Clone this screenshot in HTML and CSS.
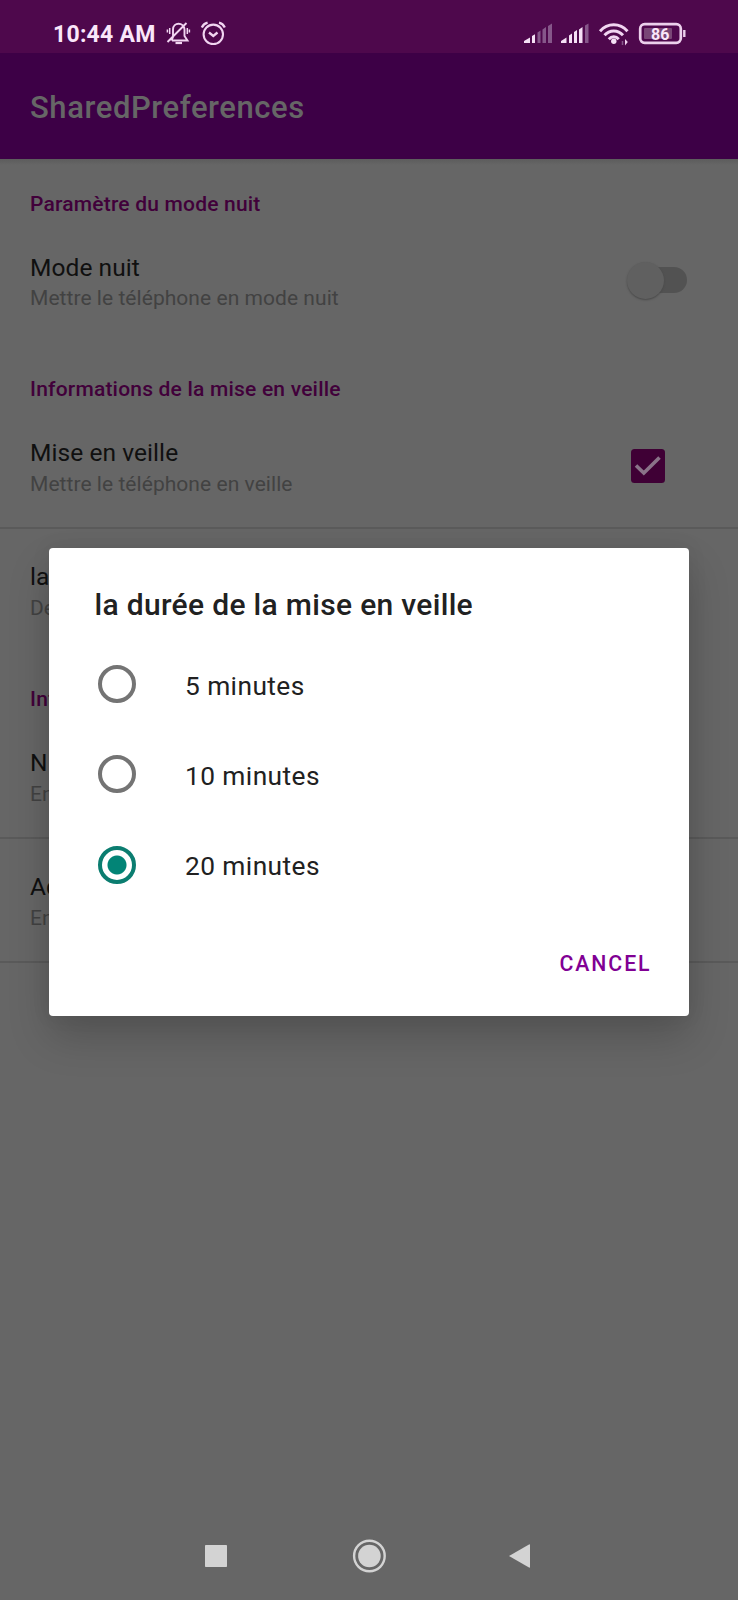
FILE: index.html
```html
<!DOCTYPE html>
<html lang="fr">
<head>
<meta charset="utf-8">
<title>SharedPreferences</title>
<link rel="stylesheet" href="styles.css">
</head>
<body>
<div class="screen">
  <header class="status">
    <span class="clock">10:44 AM</span>
    <svg class="status-left" width="62" height="26" viewBox="165 20 62 26" fill="none" stroke="#f1d5f1" stroke-width="1.9">
      <path d="M171.500 40.500 173 37V29.500C173 21.800 184 21.800 184.500 29.500V36L187.500 40.500H172M167.500 42 186.500 23"/>
      <path d="M175.500 43H182" stroke-width="2.200"/>
      <path d="M169.700 28V34M187.300 28V34M189.400 29.500V32.500M167.400 29.500V32.500" stroke-width="1.500"/>
      <circle cx="213.300" cy="34.300" r="9.700" stroke-width="2.100"/>
      <path d="M209 32.500 213.300 36 217.500 32.500M201.800 27.500C203 25 205 23.300 207.600 22.700M224.800 27.500C223.600 25 221.600 23.300 219 22.700" stroke-width="2.300"/>
    </svg>
    <svg class="status-right" width="166" height="28" viewBox="522 20 166 28">
      <g fill="#f5e0f5">
        <path d="M524 43V41L530 37.500V43ZM532 43V36L535 34.200V43Z"/>
        <path d="M561 43V41L566.500 37.500V43ZM569 43V35.500L572 33.500V43ZM574 43V32L577 30V43ZM579 43V29.500L582.500 27V43Z"/>
      </g>
      <g fill="#86578a">
        <path d="M537.500 43V32.500L540.500 30.500V43ZM542.500 43V29.500L546 27V43ZM548 43V26L552 23.500V43Z"/>
        <path d="M585 43V25.500L588.500 23.500V43Z"/>
      </g>
      <g fill="none" stroke="#f1d5f1" stroke-width="2.900">
        <path d="M600 31.200C607.500 22.600 620 22.600 627.500 31.200M604.500 35.300C609.500 29.600 618 29.600 623 35.300M608.800 39.200C611.600 36 616 36 618.700 39.200"/>
      </g>
      <circle cx="613.800" cy="41.300" r="2.700" fill="#f5e0f5"/>
      <path d="M625 39 627.800 42 625 45.500Z" fill="#f1d5f1"/>
      <path d="M622.500 41V45" stroke="#86578a" stroke-width="1.500"/>
      <rect x="640.200" y="24.200" width="40.600" height="18.600" rx="4.500" fill="none" stroke="#ecd0ec" stroke-width="2.700"/>
      <rect x="644" y="28" width="28" height="11" rx="1" fill="#794676"/>
      <path d="M684.300 30V37" stroke="#ecd0ec" stroke-width="2.400"/>
      <text class="charge" x="660.200" y="40">86</text>
    </svg>
  </header>
  <div class="appbar">SharedPreferences</div>

  <main class="prefs">
    <h2 class="category">Paramètre du mode nuit</h2>
    <section class="pref">
      <div class="pref-text"><p class="name">Mode nuit</p><p class="summary">Mettre le téléphone en mode nuit</p></div>
      <div class="toggle"><span class="track"></span><span class="thumb"></span></div>
    </section>
    <h2 class="category">Informations de la mise en veille</h2>
    <section class="pref ruled">
      <div class="pref-text"><p class="name">Mise en veille</p><p class="summary">Mettre le téléphone en veille</p></div>
      <svg class="check" width="34" height="34" viewBox="0 0 34 34"><rect width="34" height="34" rx="3.500" fill="#3f0035"/><path d="M5 16.500 12.800 24 28.500 8.500" fill="none" stroke="#8a7389" stroke-width="3.600"/></svg>
    </section>
    <section class="pref">
      <div class="pref-text"><p class="name">la durée</p><p class="summary">De</p></div>
    </section>
    <h2 class="category">Informations</h2>
    <section class="pref ruled">
      <div class="pref-text"><p class="name">N</p><p class="summary">Entrer</p></div>
    </section>
    <section class="pref ruled">
      <div class="pref-text"><p class="name">Adresse</p><p class="summary">Entrer</p></div>
    </section>
  </main>

  <nav class="navbar">
    <svg width="340" height="40" viewBox="200 1536 340 40" fill="#d3d3d3">
      <rect x="205" y="1545" width="22" height="22" rx=".7"/>
      <circle cx="369.400" cy="1556" r="11.300"/>
      <circle cx="369.400" cy="1556" r="15.300" fill="none" stroke="#d3d3d3" stroke-width="2.400"/>
      <path d="M509 1556 529 1544.500Q530 1544 530 1545V1567Q530 1568 529 1567.500Z"/>
    </svg>
  </nav>

  <div class="dialog" role="dialog">
    <h1 class="dialog-title">la durée de la mise en veille</h1>
    <div class="option"><span class="radio"></span><span class="label">5 minutes</span></div>
    <div class="option"><span class="radio"></span><span class="label">10 minutes</span></div>
    <div class="option"><span class="radio on"></span><span class="label">20 minutes</span></div>
    <div class="actions"><span class="cancel">CANCEL</span></div>
  </div>
</div>
</body>
</html>
```
FILE: styles.css
```css
* { box-sizing: border-box; }
body { margin: 0; background: #666; font-family: Roboto, sans-serif; }
h1, h2, p { margin: 0; }
.screen { position: relative; width: 738px; height: 1600px; overflow: hidden; display: flex; flex-direction: column; background: #666; }
.status { height: 53px; flex: none; padding: 20px 50px 0 53px; display: flex; background: #4e084c; }
.clock { width: 112px; font-size: 23px; line-height: 29px; font-weight: 700; letter-spacing: .25px; color: #fae6fa; white-space: nowrap; }
.status-right { margin-left: auto; }
.charge { font-size: 16px; font-weight: 700; text-anchor: middle; fill: #fae6fa; }
.appbar { height: 106px; flex: none; padding-left: 30px; font-size: 31px; line-height: 109px; font-weight: 500; letter-spacing: .58px; color: #666; background: #3d0046; }
.prefs { flex: 1; background: linear-gradient(#5c5c5c, #666 6px); }
.category { height: 62px; padding: 35px 0 0 30px; font-size: 21px; line-height: 22px; font-weight: 500; letter-spacing: .2px; color: #41003a; }
.category:first-child { height: 60px; padding-top: 34px; }
.pref { height: 124px; padding: 33px 0 0 30px; display: flex; justify-content: space-between; }
.ruled { border-bottom: 2px solid #5a5a5a; }
.name { font-size: 24.5px; line-height: 30px; letter-spacing: .07px; color: #101010; }
.category:first-child + .pref .name { padding-top: 1px; }
.category:first-child + .pref .summary { line-height: 31px; }
.summary { font-size: 21px; line-height: 32px; letter-spacing: .05px; color: #424242; }
.toggle { position: relative; width: 61px; height: 40px; margin: 9px 51px 0 0; }
.track { position: absolute; left: 10px; top: 6px; width: 51px; height: 26px; border-radius: 13px; background: #525252; }
.thumb { position: absolute; left: 1px; top: 1px; width: 37px; height: 37px; border-radius: 50%; background: #606060; box-shadow: 0 1px 2px #484848; }
.check { margin: 11px 73px 0 0; }
.navbar { height: 88px; flex: none; padding: 24px 0 0 200px; }
.dialog { position: absolute; left: 49px; top: 548px; width: 640px; height: 467.5px; padding-top: 39px; border-radius: 4px; background: #fff; box-shadow: 0 21px 42px rgba(0, 0, 0, .19), 0 0 20px rgba(0, 0, 0, .07); }
.dialog-title { height: 52px; padding-left: 45.500px; font-size: 30px; line-height: 36px; font-weight: 500; letter-spacing: .32px; color: #212121; }
.option { height: 90.3px; padding-left: 48.5px; display: flex; align-items: center; gap: 49.5px; }
.radio { width: 38px; height: 38px; flex: none; border: 4px solid #747474; border-radius: 50%; }
.radio.on { border-color: #0b7d70; background: radial-gradient(circle, #028476 9px, #fff 10px); }
.label { padding-top: 3px; font-size: 26.3px; line-height: 30px; letter-spacing: .42px; color: #212121; }
.actions { padding: 37px 37.5px 0 0; display: flex; justify-content: flex-end; }
.cancel { font-size: 21.3px; line-height: 34px; font-weight: 500; letter-spacing: 1.9px; color: #810094; }
```
